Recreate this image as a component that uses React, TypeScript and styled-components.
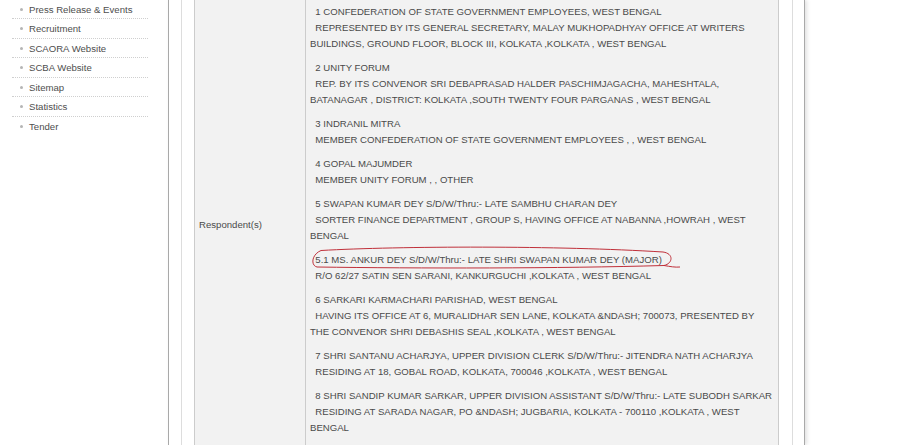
import React from 'react';
import styled, { createGlobalStyle } from 'styled-components';

const GlobalStyle = createGlobalStyle`
  html, body {
    margin: 0;
    padding: 0;
    background: #ffffff;
    overflow: hidden;
  }
  body {
    font-family: "Liberation Sans", Arial, sans-serif;
    font-size: 9.6px;
    color: #4a4a4a;
  }
`;

const Page = styled.div`
  display: flex;
  align-items: stretch;
  height: 445px;
`;

const Sidebar = styled.aside`
  width: 168px;
  flex-shrink: 0;
`;

const NavList = styled.ul`
  list-style: none;
  margin: -0.5px 0 0 12px;
  padding: 0;
  width: 136px;
`;

const NavItem = styled.li`
  display: flex;
  align-items: center;
  gap: 6px;
  padding: 4px 0 3.5px 8px;
  line-height: 11px;
  border-bottom: 1px dotted #cfcfcf;
  color: #4e4e4e;

  &:last-child {
    border-bottom: none;
  }
`;

const Bullet = styled.span`
  width: 3px;
  height: 3px;
  border-radius: 50%;
  background: #b5b5b5;
  flex-shrink: 0;
`;

const Main = styled.main`
  width: 637px;
  box-sizing: border-box;
  border-left: 1px solid #a9a9a9;
  border-right: 1px solid #a9a9a9;
  box-shadow: 2px 0 4px rgba(0, 0, 0, 0.12);
  padding: 0 11px 0 12px;
  display: flex;
`;

const Inner = styled.div`
  flex: 1;
  border-left: 1px solid #dddddd;
  border-right: 1px solid #dddddd;
  padding: 0 13px 0 12px;
  display: flex;
`;

const Table = styled.div`
  flex: 1;
  display: flex;
  background: #f2f2f2;
  border-left: 1px solid #cccccc;
  border-right: 1px solid #cccccc;
`;

const LabelCell = styled.div`
  width: 111px;
  flex-shrink: 0;
  border-right: 1px solid #cccccc;
  display: flex;
  align-items: center;
  padding: 4px 0 0 4px;
  box-sizing: border-box;
`;

const TextCell = styled.div`
  flex: 1;
  position: relative;
  padding: 4px 4px 9px 4px;
  line-height: 16px;
`;

const Party = styled.p`
  margin: 0 0 8px 0;
  &:last-child {
    margin-bottom: 0;
  }
`;

const Mark = styled.svg`
  position: absolute;
  left: -307px;
  top: 0;
  pointer-events: none;
  overflow: visible;
`;

const navItems = [
  'Press Release & Events',
  'Recruitment',
  'SCAORA Website',
  'SCBA Website',
  'Sitemap',
  'Statistics',
  'Tender',
];

const lead = '\u00a0\u00a0';

const parties: [string, string][] = [
  ['1 CONFEDERATION OF STATE GOVERNMENT EMPLOYEES, WEST BENGAL', 'REPRESENTED BY ITS GENERAL SECRETARY, MALAY MUKHOPADHYAY OFFICE AT WRITERS BUILDINGS, GROUND FLOOR, BLOCK III, KOLKATA ,KOLKATA , WEST BENGAL'],
  ['2 UNITY FORUM', 'REP. BY ITS CONVENOR SRI DEBAPRASAD HALDER PASCHIMJAGACHA, MAHESHTALA, BATANAGAR , DISTRICT: KOLKATA ,SOUTH TWENTY FOUR PARGANAS , WEST BENGAL'],
  ['3 INDRANIL MITRA', 'MEMBER CONFEDERATION OF STATE GOVERNMENT EMPLOYEES , , WEST BENGAL'],
  ['4 GOPAL MAJUMDER', 'MEMBER UNITY FORUM , , OTHER'],
  ['5 SWAPAN KUMAR DEY S/D/W/Thru:- LATE SAMBHU CHARAN DEY', 'SORTER FINANCE DEPARTMENT , GROUP S, HAVING OFFICE AT NABANNA ,HOWRAH , WEST BENGAL'],
  ['5.1 MS. ANKUR DEY S/D/W/Thru:- LATE SHRI SWAPAN KUMAR DEY (MAJOR)', 'R/O 62/27 SATIN SEN SARANI, KANKURGUCHI ,KOLKATA , WEST BENGAL'],
  ['6 SARKARI KARMACHARI PARISHAD, WEST BENGAL', 'HAVING ITS OFFICE AT 6, MURALIDHAR SEN LANE, KOLKATA &NDASH; 700073, PRESENTED BY THE CONVENOR SHRI DEBASHIS SEAL ,KOLKATA , WEST BENGAL'],
  ['7 SHRI SANTANU ACHARJYA, UPPER DIVISION CLERK S/D/W/Thru:- JITENDRA NATH ACHARJYA', 'RESIDING AT 18, GOBAL ROAD, KOLKATA, 700046 ,KOLKATA , WEST BENGAL'],
  ['8 SHRI SANDIP KUMAR SARKAR, UPPER DIVISION ASSISTANT S/D/W/Thru:- LATE SUBODH SARKAR', 'RESIDING AT SARADA NAGAR, PO &NDASH; JUGBARIA, KOLKATA - 700110 ,KOLKATA , WEST BENGAL'],
];

const App: React.FC = () => {
  return (
    <>
      <GlobalStyle />
      <Page>
        <Sidebar>
          <NavList>
            {navItems.map((item) => (
              <NavItem key={item}>
                <Bullet />
                {item}
              </NavItem>
            ))}
          </NavList>
        </Sidebar>
        <Main>
          <Inner>
            <Table>
              <LabelCell>Respondent(s)</LabelCell>
              <TextCell>
                {parties.map(([name, address]) => (
                  <Party key={name}>
                    {lead}
                    {name}
                    <br />
                    {lead}
                    {address}
                  </Party>
                ))}
                {/* hand-drawn red mark round item 5.1 */}
                <Mark width="919" height="445">
                  <path
                    d="M 322 250.5 C 400 246, 560 245.5, 664 252 C 675 253.5, 674 263.5, 665 265.5 C 560 268.5, 420 268.5, 318 267 C 311.5 265.5, 312.5 254.5, 322 250.5 M 665 265.5 C 671 266.5, 676 267.5, 681 267"
                    fill="none"
                    stroke="#c0303a"
                    strokeWidth="1"
                  />
                </Mark>
              </TextCell>
            </Table>
          </Inner>
        </Main>
      </Page>
    </>
  );
};

export default App;
